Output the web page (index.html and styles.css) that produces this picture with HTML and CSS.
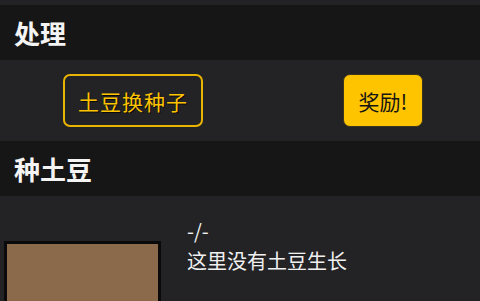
FILE: index.html
```html
<!DOCTYPE html>
<html lang="zh">
<head>
<meta charset="utf-8">
<link rel="stylesheet" href="styles.css">
</head>
<body>
<div class="prev"></div>
<h2 class="head">处理</h2>
<div class="actions">
  <button class="btn btn-outline">土豆换种子</button>
  <button class="btn btn-fill">奖励!</button>
</div>
<h2 class="head">种土豆</h2>
<div class="plot">
  <div class="soil"></div>
  <div class="info">
    <div class="line">-/-</div>
    <div class="line">这里没有土豆生长</div>
  </div>
</div>
</body>
</html>
```
FILE: styles.css
```css
html, body {
  margin: 0;
  padding: 0;
  background: #232325;
  overflow: hidden;
  font-family: "Noto Sans CJK SC", "Noto Sans", sans-serif;
  color: #f0f0f0;
}
.prev {
  height: 5px;
  background: #232325;
}
.head {
  margin: 0;
  height: 55px;
  display: flex;
  align-items: center;
  padding: 0 14px;
  background: #161616;
  color: #f4f4f4;
  font-size: 26px;
  font-weight: 700;
}
.actions {
  display: flex;
  justify-content: space-between;
  align-items: center;
  padding: 14px 57px 14px 63px;
  height: 53px;
}
.btn {
  font-family: "Noto Sans CJK SC", "Noto Sans", sans-serif;
  height: 53px;
  border-radius: 7px;
  font-size: 21px;
  padding: 0;
  display: flex;
  align-items: center;
  justify-content: center;
}
.btn-outline {
  width: 140px;
  background: transparent;
  border: 2px solid #e8b400;
  color: #ffc400;
  letter-spacing: 1px;
  text-shadow: 1px 1px 0 rgba(0, 0, 0, 0.7);
}
.btn-fill {
  width: 80px;
  background: #ffc400;
  border: 1px solid #3a3320;
  color: #151515;
}
.plot {
  display: flex;
  align-items: flex-start;
  padding-left: 4px;
}
.soil {
  width: 151px;
  height: 80px;
  margin-top: 45px;
  background: #8a6a4b;
  border: 3px solid #0a0a0a;
}
.info {
  margin-left: 26px;
  padding-top: 20px;
  font-size: 20px;
  line-height: 30px;
}
```
